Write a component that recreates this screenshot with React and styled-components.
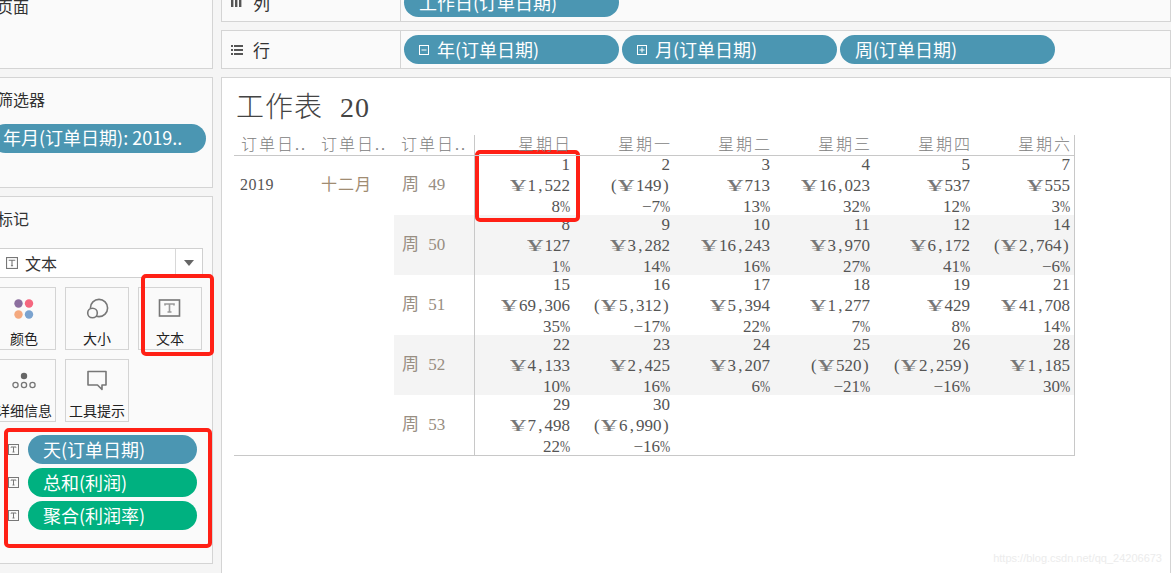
import React from 'react';
import styled, { createGlobalStyle } from 'styled-components';

const sans = '"Noto Sans CJK SC", "Liberation Sans", sans-serif';
const sheetFont = '"Liberation Serif", "Noto Sans CJK SC", serif';

const GlobalStyle = createGlobalStyle`
    html, body {
        margin: 0;
        padding: 0;
        background: #f5f5f5;
        overflow: hidden;
    }
    * {
        box-sizing: border-box;
    }
`;

const Page = styled.div`
    position: relative;
    width: 1171px;
    height: 573px;
    overflow: hidden;
    font-family: ${sans};
`;

const Layout = styled.div`
    display: flex;
    gap: 8px;
    margin: -17px 0 0 -10px;
`;

const Sidebar = styled.div`
    display: flex;
    flex-direction: column;
    gap: 8px;
    width: 223px;
    flex: none;
`;

const Panel = styled.section`
    height: ${(p) => p.$height}px;
    background: #fafafa;
    border: 1px solid #d4d4d4;
    padding-top: ${(p) => p.$top}px;
`;

const PanelTitle = styled.div`
    font-size: 16px;
    line-height: 20px;
    color: #333;
    padding-left: 6px;
`;

const FilterPill = styled.div`
    height: 29px;
    margin: 15px 6px 0 0;
    padding-left: 12px;
    border-radius: 15px;
    background: #4b96b2;
    color: #fff;
    font-size: 18px;
    line-height: 27px;
    white-space: nowrap;
`;

const Dropdown = styled.div`
    display: flex;
    align-items: center;
    height: 30px;
    margin: 20px 9px 0 0;
    background: #fff;
    border: 1px solid #d0d0d0;
`;

const DropdownValue = styled.div`
    flex: 1;
    display: flex;
    align-items: center;
    gap: 7px;
    padding-left: 14px;
    font-size: 16px;
    line-height: 26px;
    color: #333;
`;

const DropdownArrow = styled.div`
    width: 27px;
    height: 100%;
    border-left: 1px solid #d8d8d8;
    display: flex;
    align-items: center;
    justify-content: center;

    &::after {
        content: '';
        border-left: 5px solid transparent;
        border-right: 5px solid transparent;
        border-top: 6px solid #666;
    }
`;

const CardGrid = styled.div`
    display: grid;
    grid-template-columns: repeat(3, 64px);
    grid-auto-rows: 63px;
    gap: 9px;
    margin: 9px 0 0 1px;
`;

const Card = styled.div`
    display: flex;
    flex-direction: column;
    align-items: center;
    border: 1px solid #d4d4d4;
    background: #fafafa;
    padding-top: 5px;
    font-size: 14px;
    line-height: 16px;
    color: #222;
    white-space: nowrap;

    svg {
        flex: none;
        margin-bottom: 7px;
    }
`;

const FieldList = styled.div`
    display: flex;
    flex-direction: column;
    gap: 4px;
    margin: 13px 0 0 17px;
`;

const FieldRow = styled.div`
    display: flex;
    align-items: center;
    gap: 9px;
`;

const Pill = styled.div`
    display: flex;
    align-items: center;
    gap: 8px;
    flex: none;
    width: ${(p) => p.$width}px;
    height: 29px;
    padding-left: ${(p) => p.$pad}px;
    border-radius: 15px;
    background: ${(p) => (p.$green ? '#00b180' : '#4b96b2')};
    color: #fff;
    font-size: 18px;
    line-height: 27px;
    white-space: nowrap;
`;

const Main = styled.div`
    flex: 1;
    display: flex;
    flex-direction: column;
    gap: 8px;
    min-width: 0;
`;

const Shelf = styled.div`
    display: flex;
    height: 39px;
    background: #fafafa;
    border: 1px solid #d4d4d4;
`;

const ShelfLabel = styled.div`
    display: flex;
    align-items: center;
    gap: 10px;
    width: 179px;
    flex: none;
    padding-left: 9px;
    border-right: 1px solid #d4d4d4;
    font-size: 17px;
    color: #333;
`;

const ShelfPills = styled.div`
    display: flex;
    align-items: center;
    gap: 3px;
    padding-left: 3px;
`;

const Sheet = styled.section`
    height: 520px;
    background: #fff;
    border: 1px solid #d4d4d4;
    padding-left: 12px;
`;

const SheetTitle = styled.h1`
    margin: 0 0 0 2px;
    height: 57px;
    font-family: ${sheetFont};
    font-weight: 300;
    font-size: 28px;
    line-height: 60px;
    letter-spacing: 1px;
    word-spacing: 9px;
    color: #444;
`;

const Table = styled.div`
    width: 841px;
    border-right: 1px solid #c8c8c8;
    border-bottom: 1px solid #c8c8c8;
    font-family: ${sheetFont};
    font-size: 17px;
    color: #555;
`;

const HeadRow = styled.div`
    position: relative;
    z-index: 1;
    display: grid;
    grid-template-columns: repeat(3, 80px) repeat(6, 100px);
    height: 21px;
    margin-bottom: -1px;
    border-bottom: 1px solid #c8c8c8;
`;

const HeadCell = styled.div`
    border-left: ${(p) => (p.$divider ? '1px solid #c8c8c8' : 'none')};
    padding: ${(p) => (p.$right ? '0 2px 0 0' : '0 0 0 7px')};
    text-align: ${(p) => (p.$right ? 'right' : 'left')};
    font-size: 16px;
    font-weight: 300;
    line-height: 20px;
    letter-spacing: 2px;
    color: #808080;
    white-space: nowrap;
`;

const Row = styled.div`
    display: grid;
    grid-template-columns: repeat(3, 80px) repeat(6, 100px);
    height: 60px;
`;

const Dim = styled.div`
    padding-left: ${(p) => p.$pad}px;
    line-height: 60px;
    color: ${(p) => p.$color};
    font-size: 16px;
    letter-spacing: ${(p) => p.$spacing}px;
`;

const WeekCell = styled.div`
    padding-left: 8px;
    line-height: 60px;
    color: #988e82;
    word-spacing: 5px;
    background: ${(p) => (p.$shaded ? '#f4f4f4' : '#fff')};
`;

const DayCell = styled.div`
    display: flex;
    flex-direction: column;
    justify-content: center;
    align-items: flex-end;
    height: 60px;
    padding-right: 4px;
    line-height: 21px;
    white-space: nowrap;
    background: ${(p) => (p.$shaded ? '#f4f4f4' : '#fff')};
    border-left: ${(p) => (p.$divider ? '1px solid #c8c8c8' : 'none')};
`;

const Line = styled.span`
    display: block;
    height: 21px;
`;

const Slot = styled.span`
    display: inline-block;
    width: 8.5px;
    text-align: center;
`;

const Percent = styled.span`
    display: inline-block;
    width: 10px;
    transform: scaleX(0.72);
    transform-origin: left center;
`;

const Yen = styled.span`
    display: inline-block;
    width: 18px;
    color: #777;
    transform: scaleX(1.9);
    transform-origin: left center;
`;

const RedBox = styled.div`
    position: absolute;
    left: ${(p) => p.$x}px;
    top: ${(p) => p.$y}px;
    width: ${(p) => p.$w}px;
    height: ${(p) => p.$h}px;
    border: 4px solid #ff2015;
    border-radius: 5px;
`;

const Watermark = styled.div`
    position: absolute;
    right: 9px;
    top: 551px;
    font-family: "Liberation Sans", sans-serif;
    font-size: 11px;
    line-height: 14px;
    color: #ececec;
`;

const TIcon = ({ size = 11, color = '#777' }) => (
    <svg width={size} height={size} viewBox="0 0 11 11" fill="none">
        <rect x="0.5" y="0.5" width="10" height="10" stroke={color} />
        <path d="M3 3.5V3H8V3.5M5.5 3V8M4.5 8H6.5" stroke={color} />
    </svg>
);

const ExpandIcon = ({ plus }) => (
    <svg width="10" height="10" viewBox="0 0 10 10" fill="none" stroke="#fff">
        <rect x="0.5" y="0.5" width="9" height="9" />
        <path d={plus ? 'M2.5 5H7.5M5 2.5V7.5' : 'M2.5 5H7.5'} />
    </svg>
);

const ColumnsIcon = () => (
    <svg width="12" height="12" viewBox="0 0 12 12" fill="#555">
        <rect x="0" y="1" width="2.4" height="9" />
        <rect x="4" y="1" width="2.4" height="9" />
        <rect x="8" y="1" width="2.4" height="9" />
    </svg>
);

const RowsIcon = () => (
    <svg width="12" height="12" viewBox="0 0 12 12" fill="#555">
        <rect x="0" y="1" width="2" height="2" />
        <rect x="3" y="1" width="9" height="2" />
        <rect x="0" y="5" width="2" height="2" />
        <rect x="3" y="5" width="9" height="2" />
        <rect x="0" y="9" width="2" height="2" />
        <rect x="3" y="9" width="9" height="2" />
    </svg>
);

const ColorIcon = () => (
    <svg width="30" height="30" viewBox="0 0 30 30">
        <circle cx="9.5" cy="10.5" r="4.2" fill="#8c6f9f" />
        <circle cx="20" cy="10.5" r="4.2" fill="#f5677f" />
        <circle cx="9.5" cy="21.5" r="4.2" fill="#f4a97f" />
        <circle cx="20" cy="21.5" r="4.2" fill="#7ba3cf" />
    </svg>
);

const SizeIcon = () => (
    <svg width="30" height="30" viewBox="0 0 30 30" fill="none" stroke="#777" strokeWidth="1.6">
        <circle cx="17" cy="15" r="8.6" />
        <circle cx="10.5" cy="20" r="4.8" fill="#fafafa" />
    </svg>
);

const TextIcon = () => (
    <svg width="30" height="30" viewBox="0 0 30 30" fill="none">
        <rect x="4.5" y="7" width="20" height="16" stroke="#777" strokeWidth="1.6" />
        <path d="M10 12.5V11H19V12.5M14.5 11V19M12.5 19H16.5" stroke="#999" strokeWidth="1.6" />
    </svg>
);

const DetailIcon = () => (
    <svg width="30" height="30" viewBox="0 0 30 30" fill="none" stroke="#777" strokeWidth="1.3">
        <circle cx="15" cy="11" r="3.2" fill="#666" stroke="none" />
        <circle cx="6.5" cy="20" r="2.6" />
        <circle cx="15" cy="20" r="2.6" />
        <circle cx="23.5" cy="20" r="2.6" />
    </svg>
);

const TooltipIcon = () => (
    <svg width="30" height="30" viewBox="0 0 30 30" fill="none" stroke="#777" strokeWidth="1.6">
        <path d="M6 6.5H24V20H20V24.5L15.5 20H6Z" strokeLinejoin="round" />
    </svg>
);

const marks = [
    { label: '颜色', icon: <ColorIcon /> },
    { label: '大小', icon: <SizeIcon /> },
    { label: '文本', icon: <TextIcon /> },
    { label: '详细信息', icon: <DetailIcon /> },
    { label: '工具提示', icon: <TooltipIcon /> },
];

const fields = [
    { label: '天(订单日期)' },
    { label: '总和(利润)', green: true },
    { label: '聚合(利润率)', green: true },
];

const days = ['星期日', '星期一', '星期二', '星期三', '星期四', '星期六'];

const weeks = [
    {
        week: 49,
        cells: [
            ['1', '¥1,522', '8%'], ['2', '(¥149)', '−7%'], ['3', '¥713', '13%'],
            ['4', '¥16,023', '32%'], ['5', '¥537', '12%'], ['7', '¥555', '3%'],
        ],
    },
    {
        week: 50,
        cells: [
            ['8', '¥127', '1%'], ['9', '¥3,282', '14%'], ['10', '¥16,243', '16%'],
            ['11', '¥3,970', '27%'], ['12', '¥6,172', '41%'], ['14', '(¥2,764)', '−6%'],
        ],
    },
    {
        week: 51,
        cells: [
            ['15', '¥69,306', '35%'], ['16', '(¥5,312)', '−17%'], ['17', '¥5,394', '22%'],
            ['18', '¥1,277', '7%'], ['19', '¥429', '8%'], ['21', '¥41,708', '14%'],
        ],
    },
    {
        week: 52,
        cells: [
            ['22', '¥4,133', '10%'], ['23', '¥2,425', '16%'], ['24', '¥3,207', '6%'],
            ['25', '(¥520)', '−21%'], ['26', '(¥2,259)', '−16%'], ['28', '¥1,185', '30%'],
        ],
    },
    {
        week: 53,
        cells: [
            ['29', '¥7,498', '22%'], ['30', '(¥6,990)', '−16%'], null, null, null, null,
        ],
    },
];

const Figure = ({ text }) => (
    <>
        {[...text].map((ch, i) => {
            if (ch === '¥') return <Yen key={i}>{ch}</Yen>;
            if (ch === '%') return <Percent key={i}>{ch}</Percent>;
            if (',()'.includes(ch)) return <Slot key={i}>{ch}</Slot>;
            return ch;
        })}
    </>
);

const App = () => {
    return (
        <Page>
            <GlobalStyle />
            <Layout>
                <Sidebar>
                    <Panel $height={86} $top={12}>
                        <PanelTitle>页面</PanelTitle>
                    </Panel>
                    <Panel $height={111} $top={11}>
                        <PanelTitle>筛选器</PanelTitle>
                        <FilterPill>年月(订单日期): 2019..</FilterPill>
                    </Panel>
                    <Panel $height={368} $top={11}>
                        <PanelTitle>标记</PanelTitle>
                        <Dropdown>
                            <DropdownValue>
                                <TIcon size={12} />
                                文本
                            </DropdownValue>
                            <DropdownArrow />
                        </Dropdown>
                        <CardGrid>
                            {marks.map((mark) => (
                                <Card key={mark.label}>
                                    {mark.icon}
                                    {mark.label}
                                </Card>
                            ))}
                        </CardGrid>
                        <FieldList>
                            {fields.map((field) => (
                                <FieldRow key={field.label}>
                                    <TIcon size={11} />
                                    <Pill $width={169} $pad={15} $green={field.green}>{field.label}</Pill>
                                </FieldRow>
                            ))}
                        </FieldList>
                    </Panel>
                </Sidebar>
                <Main>
                    <Shelf>
                        <ShelfLabel><ColumnsIcon />列</ShelfLabel>
                        <ShelfPills>
                            <Pill $width={215} $pad={15}>工作日(订单日期)</Pill>
                        </ShelfPills>
                    </Shelf>
                    <Shelf>
                        <ShelfLabel><RowsIcon />行</ShelfLabel>
                        <ShelfPills>
                            <Pill $width={215} $pad={15}><ExpandIcon />年(订单日期)</Pill>
                            <Pill $width={215} $pad={15}><ExpandIcon plus />月(订单日期)</Pill>
                            <Pill $width={215} $pad={15}>周(订单日期)</Pill>
                        </ShelfPills>
                    </Shelf>
                    <Sheet>
                        <SheetTitle>工作表 20</SheetTitle>
                        <Table>
                            <HeadRow>
                                <HeadCell>订单日..</HeadCell>
                                <HeadCell>订单日..</HeadCell>
                                <HeadCell>订单日..</HeadCell>
                                {days.map((day, i) => (
                                    <HeadCell key={day} $right $divider={i === 0}>{day}</HeadCell>
                                ))}
                            </HeadRow>
                            {weeks.map((row, r) => (
                                <Row key={row.week}>
                                    <Dim $pad={6} $color="#555" $spacing={0.5}>{r === 0 && '2019'}</Dim>
                                    <Dim $pad={7} $color="#a08c72" $spacing={1}>{r === 0 && '十二月'}</Dim>
                                    <WeekCell $shaded={r % 2 === 1}>周 {row.week}</WeekCell>
                                    {row.cells.map((cell, c) => (
                                        <DayCell key={c} $shaded={r % 2 === 1} $divider={c === 0}>
                                            {cell && cell.map((value, l) => (
                                                <Line key={l}><Figure text={value} /></Line>
                                            ))}
                                        </DayCell>
                                    ))}
                                </Row>
                            ))}
                        </Table>
                    </Sheet>
                </Main>
            </Layout>
            <RedBox $x={475} $y={150} $w={105} $h={72} />
            <RedBox $x={141} $y={274} $w={73} $h={82} />
            <RedBox $x={4} $y={428} $w={208} $h={120} />
            <Watermark>https://blog.csdn.net/qq_24206673</Watermark>
        </Page>
    );
};

export default App;
